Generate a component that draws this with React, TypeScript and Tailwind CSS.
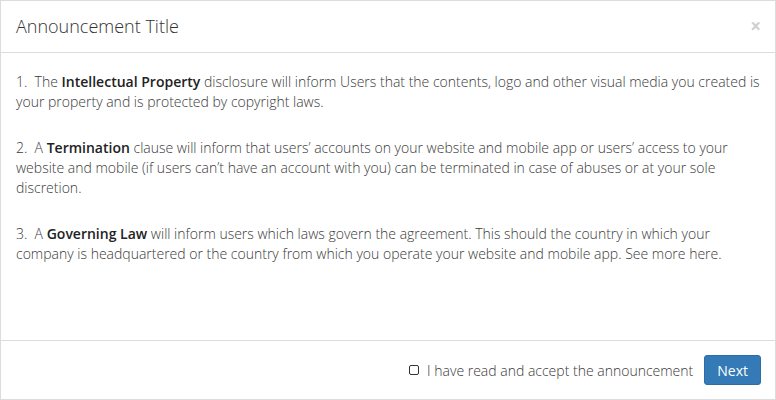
const items = [
  {
    n: "1.",
    pre: "The",
    bold: "Intellectual Property",
    post: "disclosure will inform Users that the contents, logo and other visual media you created is your property and is protected by copyright laws.",
  },
  {
    n: "2.",
    pre: "A",
    bold: "Termination",
    post: "clause will inform that users\u2019 accounts on your website and mobile app or users\u2019 access to your website and mobile (if users can\u2019t have an account with you) can be terminated in case of abuses or at your sole discretion.",
  },
  {
    n: "3.",
    pre: "A",
    bold: "Governing Law",
    post: "will inform users which laws govern the agreement. This should the country in which your company is headquartered or the country from which you operate your website and mobile app. See more here.",
  },
];

export default function App() {
  return (
    <div
      className="w-[776px] h-[400px] bg-white flex flex-col border border-[#dcdcdc] text-[#333]"
      style={{ fontFamily: '"Open Sans", "Liberation Sans", sans-serif' }}
    >
      <div className="h-[52px] shrink-0 flex items-center justify-between pl-[15px] pr-[14px] border-b border-[#dcdcdc]">
        <h4 className="text-[18px] font-light text-[#333]">Announcement Title</h4>
        <button className="text-[#cfcfcf] text-[19px] font-bold leading-none">×</button>
      </div>

      <div className="flex-1 px-[15px] pt-[19px] text-[14px] leading-[20px] font-light text-[#3a3a3a]">
        {items.map((it) => (
          <p key={it.n} className="mb-[26px]">
            {it.n}&nbsp; {it.pre} <b className="font-semibold text-[#222]">{it.bold}</b> {it.post}
          </p>
        ))}
      </div>

      <div className="h-[59px] shrink-0 border-t border-[#dcdcdc] flex items-center justify-end gap-[11px] pr-[14px]">
        <label className="flex items-center gap-[8px] text-[14px] font-light text-[#3a3a3a]">
          <span className="w-[10px] h-[10px] border border-[#333] rounded-[2px]" />
          I have read and accept the announcement
        </label>
        <button className="h-[30px] px-[12px] rounded-[3px] bg-[#337ab7] border border-[#2e6da4] text-white text-[14px] font-normal">
          Next
        </button>
      </div>
    </div>
  );
}
